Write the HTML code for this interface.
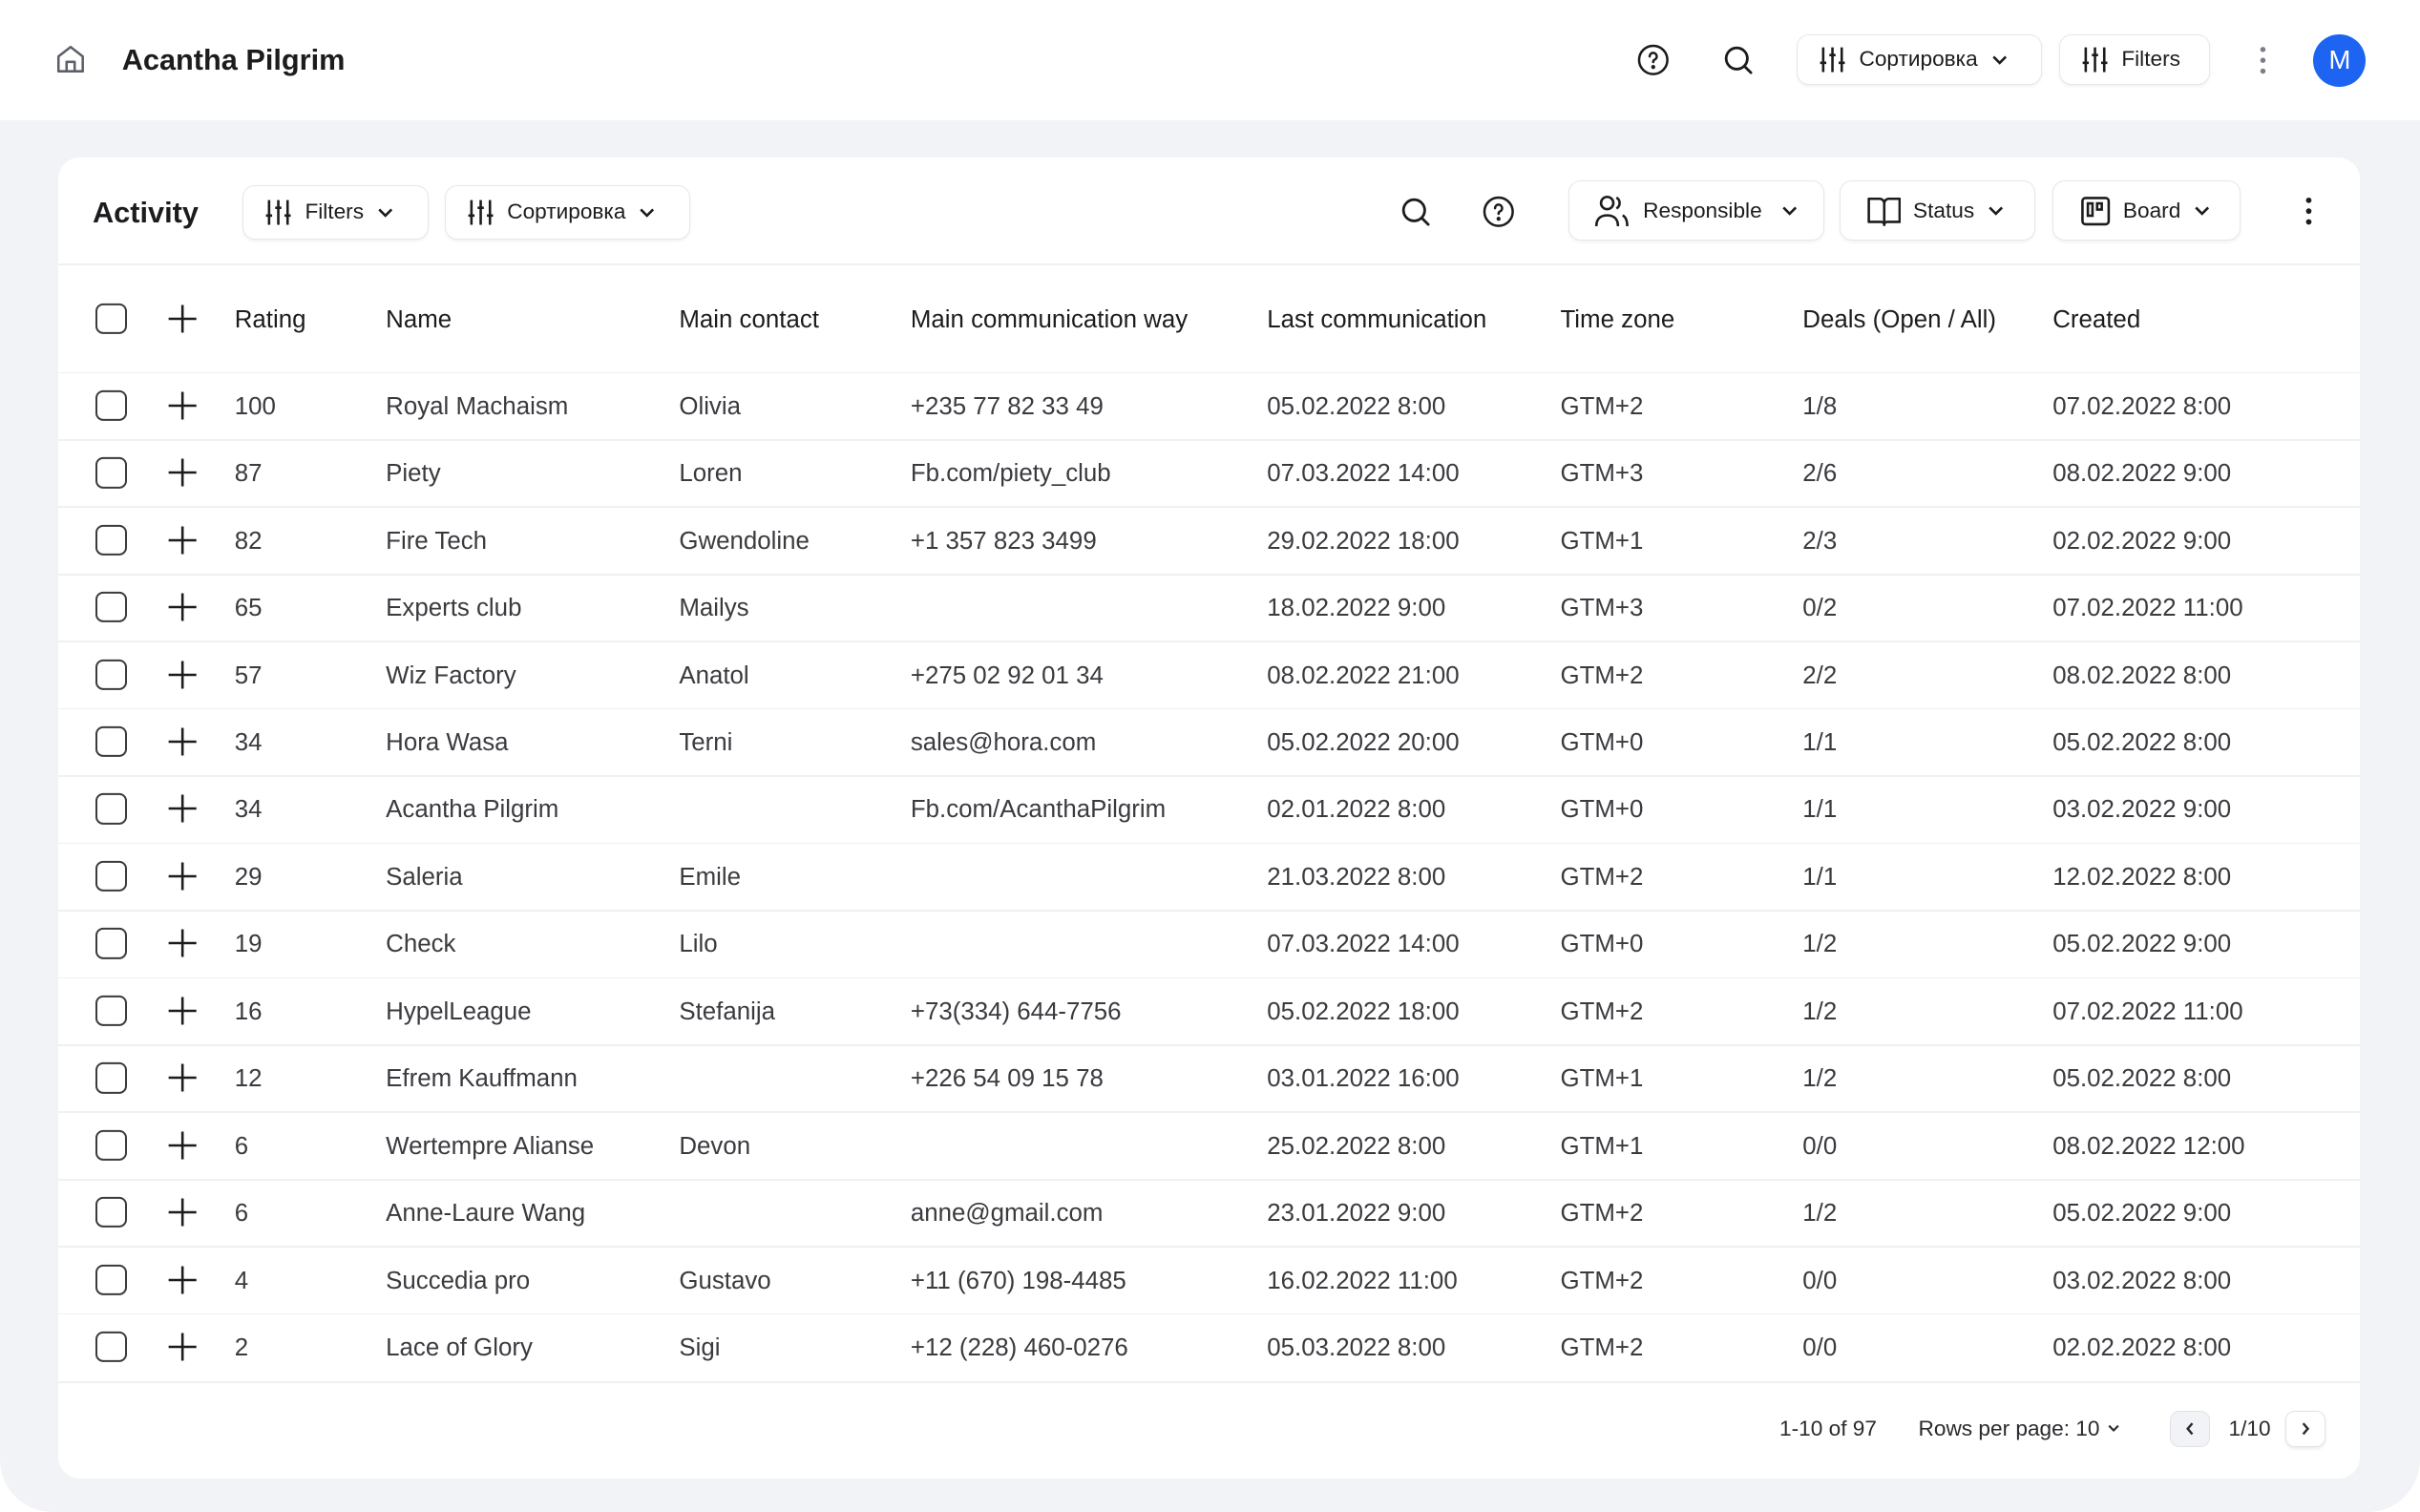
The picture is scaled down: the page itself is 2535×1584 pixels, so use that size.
<!DOCTYPE html>
<html><head><meta charset="utf-8"><style>
html,body{margin:0;padding:0;background:#fff}
#w{zoom:1.61671;width:1568px;height:980px;position:relative;overflow:hidden;font-family:"Liberation Sans",sans-serif;color:#1c1c1f;background:#fff}
#bg{position:absolute;left:0;top:78px;width:1568px;height:902px;background:#f2f3f6;border-radius:0 0 34px 34px}
.a{position:absolute}
.btn{position:absolute;border:1px solid #e6e7ea;border-radius:8px;background:#fff;box-shadow:0 1px 2px rgba(0,0,0,.05);display:flex;align-items:center;font-size:14px;color:#1c1c1f;box-sizing:border-box;padding-left:14px}
.btn svg{margin-right:8px}
.chev{margin-left:8px;margin-right:0!important}
#card{position:absolute;left:38px;top:102px;width:1491px;height:856px;background:#fff;border-radius:14px}
.hl{position:absolute;left:0;width:1491px;height:1px;background:#eef0f2}
.row{position:absolute;left:0;width:1491px;font-size:16px;color:#3a3a3f}
.row span{position:absolute;top:50%;transform:translateY(-45%);white-space:nowrap}
.cb{position:absolute;left:24px;width:20px;height:20px;border:1.5px solid #3a3a3f;border-radius:5px;box-sizing:border-box;top:50%;transform:translateY(-50%)}
.pl{position:absolute;left:70px;top:50%;transform:translateY(-50%)}
.hd span{color:#1c1c1f;font-size:16px}
</style></head><body><div id="w">
<div id="bg"></div>
<svg class="a" style="left:35px;top:28px" width="21" height="21" viewBox="0 0 24 24" fill="none" stroke="#5c6068" stroke-width="1.8" stroke-linejoin="round"><path d="M3 10L12 3l9 7v11H3z"/><path d="M9 21v-7h6v7"/></svg>
<div class="a" style="left:79px;top:28px;font-size:19px;font-weight:bold">Acantha Pilgrim</div>
<svg class="a" style="left:1060px;top:28px" width="22" height="22" viewBox="0 0 24 24" fill="none" stroke="#1c1c1f" stroke-width="1.7"><circle cx="12" cy="12" r="10"/><path d="M9.5 9.5a2.5 2.5 0 1 1 3.5 2.3c-.7.3-1 .9-1 1.7" stroke-linecap="round"/><circle cx="12" cy="17" r=".6" fill="#1c1c1f"/></svg>
<svg class="a" style="left:1115px;top:28px" width="22" height="22" viewBox="0 0 24 24" fill="none" stroke="#1c1c1f" stroke-width="1.9" stroke-linecap="round"><circle cx="11" cy="11" r="7.5"/><path d="M16.5 16.5L21 21"/></svg>
<div class="btn" style="left:1164px;top:22px;width:159px;height:33px"><svg width="18" height="18" viewBox="0 0 18 18" stroke="#1c1c1f" stroke-width="1.6" fill="none"><path d="M3 1v16M9 1v16M15 1v16M1 11h4M7 6h4M13 11h4"/></svg>Сортировка<svg class="chev" width="12" height="12" viewBox="0 0 12 12" fill="none" stroke="#1c1c1f" stroke-width="1.6"><path d="M2 4l4 4 4-4"/></svg></div>
<div class="btn" style="left:1334px;top:22px;width:98px;height:33px"><svg width="18" height="18" viewBox="0 0 18 18" stroke="#1c1c1f" stroke-width="1.6" fill="none"><path d="M3 1v16M9 1v16M15 1v16M1 11h4M7 6h4M13 11h4"/></svg>Filters</div>
<svg class="a" style="left:1462px;top:29px" width="8" height="20" viewBox="0 0 8 20" fill="#7a7e86"><circle cx="4" cy="3" r="1.7"/><circle cx="4" cy="10" r="1.7"/><circle cx="4" cy="17" r="1.7"/></svg>
<div class="a" style="left:1499px;top:22px;width:34px;height:34px;border-radius:50%;background:#1d64f2;color:#fff;font-size:17px;text-align:center;line-height:34px">M</div>

<div id="card">
<div class="a" style="left:22px;top:25px;font-size:19px;font-weight:bold">Activity</div>
<div class="btn" style="left:119px;top:18px;width:121px;height:35px"><svg width="18" height="18" viewBox="0 0 18 18" stroke="#1c1c1f" stroke-width="1.6" fill="none"><path d="M3 1v16M9 1v16M15 1v16M1 11h4M7 6h4M13 11h4"/></svg>Filters<svg class="chev" width="12" height="12" viewBox="0 0 12 12" fill="none" stroke="#1c1c1f" stroke-width="1.6"><path d="M2 4l4 4 4-4"/></svg></div>
<div class="btn" style="left:250px;top:18px;width:159px;height:35px"><svg width="18" height="18" viewBox="0 0 18 18" stroke="#1c1c1f" stroke-width="1.6" fill="none"><path d="M3 1v16M9 1v16M15 1v16M1 11h4M7 6h4M13 11h4"/></svg>Сортировка<svg class="chev" width="12" height="12" viewBox="0 0 12 12" fill="none" stroke="#1c1c1f" stroke-width="1.6"><path d="M2 4l4 4 4-4"/></svg></div>
<svg class="a" style="left:868px;top:24px" width="22" height="22" viewBox="0 0 24 24" fill="none" stroke="#1c1c1f" stroke-width="1.9" stroke-linecap="round"><circle cx="11" cy="11" r="7.5"/><path d="M16.5 16.5L21 21"/></svg>
<svg class="a" style="left:922px;top:24px" width="22" height="22" viewBox="0 0 24 24" fill="none" stroke="#1c1c1f" stroke-width="1.7"><circle cx="12" cy="12" r="10"/><path d="M9.5 9.5a2.5 2.5 0 1 1 3.5 2.3c-.7.3-1 .9-1 1.7" stroke-linecap="round"/><circle cx="12" cy="17" r=".6" fill="#1c1c1f"/></svg>
<div class="btn" style="left:978px;top:15px;width:166px;height:39px;padding-left:16px"><svg width="24" height="22" viewBox="0 0 24 22" fill="none" stroke="#1c1c1f" stroke-width="1.6"><circle cx="9" cy="6" r="4"/><path d="M2 21c0-5 3-7 7-7s7 2 7 7"/><path d="M15 2.5a4 4 0 0 1 0 7M19 14c2 1 3 3 3 7"/></svg>Responsible<svg class="chev" style="margin-left:12px" width="12" height="12" viewBox="0 0 12 12" fill="none" stroke="#1c1c1f" stroke-width="1.6"><path d="M2 4l4 4 4-4"/></svg></div>
<div class="btn" style="left:1154px;top:15px;width:127px;height:39px;padding-left:17px"><svg width="22" height="20" viewBox="0 0 22 20" fill="none" stroke="#1c1c1f" stroke-width="1.6" stroke-linejoin="round"><path d="M1 2h7a3 3 0 0 1 3 3v14a2 2 0 0 0-2-2H1zM21 2h-7a3 3 0 0 0-3 3v14a2 2 0 0 1 2-2h8z"/></svg>Status<svg class="chev" width="12" height="12" viewBox="0 0 12 12" fill="none" stroke="#1c1c1f" stroke-width="1.6"><path d="M2 4l4 4 4-4"/></svg></div>
<div class="btn" style="left:1292px;top:15px;width:122px;height:39px;padding-left:17px"><svg width="20" height="20" viewBox="0 0 20 20" fill="none" stroke="#1c1c1f" stroke-width="1.6"><rect x="1.5" y="1.5" width="17" height="17" rx="2"/><rect x="5" y="5" width="3" height="8"/><rect x="11" y="5" width="3" height="4"/></svg>Board<svg class="chev" width="12" height="12" viewBox="0 0 12 12" fill="none" stroke="#1c1c1f" stroke-width="1.6"><path d="M2 4l4 4 4-4"/></svg></div>
<svg class="a" style="left:1454px;top:25px" width="8" height="20" viewBox="0 0 8 20" fill="#1c1c1f"><circle cx="4" cy="3" r="1.8"/><circle cx="4" cy="10" r="1.8"/><circle cx="4" cy="17" r="1.8"/></svg>
<div class="hl" style="top:69px"></div>

<div class="row hd" style="top:70px;height:69px"><div class="cb"></div><svg class="pl" width="20" height="20" viewBox="0 0 20 20" stroke="#1c1c1f" stroke-width="1.6"><path d="M10 1v18M1 10h18"/></svg><span style="left:114px">Rating</span><span style="left:212px">Name</span><span style="left:402px">Main contact</span><span style="left:552px">Main communication way</span><span style="left:783px">Last communication</span><span style="left:973px">Time zone</span><span style="left:1130px">Deals (Open / All)</span><span style="left:1292px">Created</span></div>
<div class="hl" style="top:139px"></div>
<div id="rows"></div>

<div class="hl" style="top:793px"></div>
<div class="a" style="left:1115px;top:816px;font-size:14px;color:#2a2a2e">1-10 of 97</div>
<div class="a" style="left:1205px;top:816px;font-size:14px;color:#2a2a2e">Rows per page: 10 <svg width="10" height="10" viewBox="0 0 10 10" fill="none" stroke="#2a2a2e" stroke-width="1.3"><path d="M2 3.5l3 3 3-3"/></svg></div>
<div class="a" style="left:1368px;top:812px;width:26px;height:24px;border:1px solid #e0e2e6;border-radius:6px;background:#f2f3f6;box-sizing:border-box;text-align:center"><svg width="10" height="22" viewBox="0 0 10 22" fill="none" stroke="#2a2a2e" stroke-width="1.5"><path d="M6.5 7.5L3.5 11l3 3.5"/></svg></div>
<div class="a" style="left:1406px;top:816px;font-size:14px;color:#2a2a2e">1/10</div>
<div class="a" style="left:1443px;top:812px;width:26px;height:24px;border:1px solid #e0e2e6;border-radius:6px;background:#fff;box-sizing:border-box;text-align:center;box-shadow:0 1px 2px rgba(0,0,0,.08)"><svg width="10" height="22" viewBox="0 0 10 22" fill="none" stroke="#2a2a2e" stroke-width="1.5"><path d="M3.5 7.5l3 3.5-3 3.5"/></svg></div>
</div>
</div>
<script>
var d=[["100","Royal Machaism","Olivia","+235 77 82 33 49","05.02.2022 8:00","GTM+2","1/8","07.02.2022 8:00"],
["87","Piety","Loren","Fb.com/piety_club","07.03.2022 14:00","GTM+3","2/6","08.02.2022 9:00"],
["82","Fire Tech","Gwendoline","+1 357 823 3499","29.02.2022 18:00","GTM+1","2/3","02.02.2022 9:00"],
["65","Experts club","Mailys","","18.02.2022 9:00","GTM+3","0/2","07.02.2022 11:00"],
["57","Wiz Factory","Anatol","+275 02 92 01 34","08.02.2022 21:00","GTM+2","2/2","08.02.2022 8:00"],
["34","Hora Wasa","Terni","sales@hora.com","05.02.2022 20:00","GTM+0","1/1","05.02.2022 8:00"],
["34","Acantha Pilgrim","","Fb.com/AcanthaPilgrim","02.01.2022 8:00","GTM+0","1/1","03.02.2022 9:00"],
["29","Saleria","Emile","","21.03.2022 8:00","GTM+2","1/1","12.02.2022 8:00"],
["19","Check","Lilo","","07.03.2022 14:00","GTM+0","1/2","05.02.2022 9:00"],
["16","HypelLeague","Stefanija","+73(334) 644-7756","05.02.2022 18:00","GTM+2","1/2","07.02.2022 11:00"],
["12","Efrem Kauffmann","","+226 54 09 15 78","03.01.2022 16:00","GTM+1","1/2","05.02.2022 8:00"],
["6","Wertempre Alianse","Devon","","25.02.2022 8:00","GTM+1","0/0","08.02.2022 12:00"],
["6","Anne-Laure Wang","","anne@gmail.com","23.01.2022 9:00","GTM+2","1/2","05.02.2022 9:00"],
["4","Succedia pro","Gustavo","+11 (670) 198-4485","16.02.2022 11:00","GTM+2","0/0","03.02.2022 8:00"],
["2","Lace of Glory","Sigi","+12 (228) 460-0276","05.03.2022 8:00","GTM+2","0/0","02.02.2022 8:00"]];
var x=[114,212,402,552,783,973,1130,1292],h="";
d.forEach(function(r,i){var t=139+i*43.57;
h+='<div class="row" style="top:'+t+'px;height:43.57px"><div class="cb"></div><svg class="pl" width="20" height="20" viewBox="0 0 20 20" stroke="#1c1c1f" stroke-width="1.6"><path d="M10 1v18M1 10h18"/></svg>';
r.forEach(function(c,j){h+='<span style="left:'+x[j]+'px">'+c+'</span>'});
h+='</div>';if(i<14)h+='<div class="hl" style="top:'+(t+43.57)+'px"></div>';});
document.getElementById('rows').outerHTML=h;
</script>
</body></html>
